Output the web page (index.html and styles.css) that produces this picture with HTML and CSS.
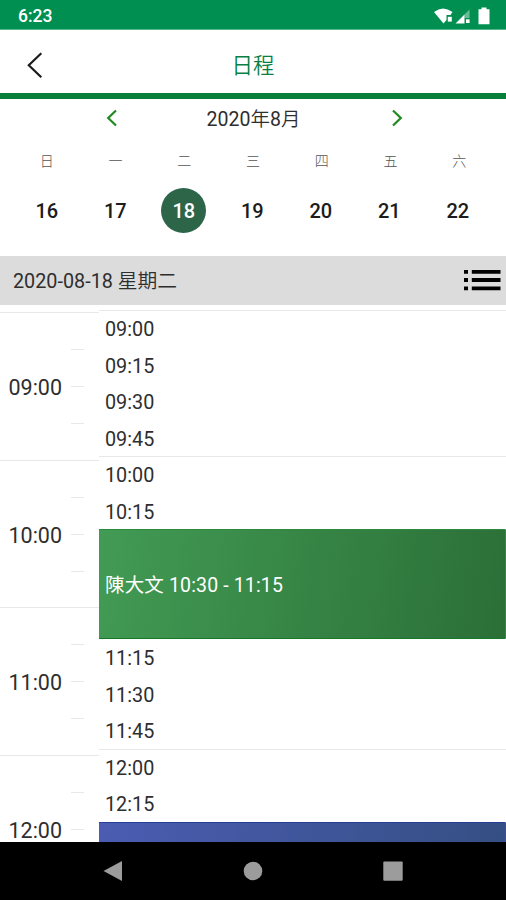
FILE: index.html
```html
<!DOCTYPE html>
<html lang="zh-Hant">
<head>
    <meta charset="UTF-8">
    <meta name="viewport" content="width=device-width, initial-scale=1.0">
    <title>日程</title>
    <link rel="stylesheet" href="styles.css">
</head>
<body>
    <div class="screen">
        <!-- Status Bar -->
        <div class="status-bar">
            <span class="clock">6:23</span>
            <svg class="status-icons" width="58" height="20" viewBox="0 0 58 20">
                <path d="M1 6Q10 -1 19.5 6L17.5 9H13.5V14L10.5 17.5Z" fill="#fff"/>
                <path d="M14.8 10.8H18.8V15.6H14.8Z" fill="#fff"/>
                <path d="M22.5 17.5L31.5 8.5V17.5Z" fill="#fff"/>
                <path d="M31.5 8.5L36.5 3.5V12H31.5Z" fill="#fff" opacity="0.4"/>
                <path d="M33 13.3H36.6V17H33Z" fill="#fff"/>
                <path d="M48.5 1.5H53.5V3.3H56.5V18.2H45.5V3.3H48.5Z" fill="#fff"/>
            </svg>
        </div>

        <!-- App Header -->
        <div class="header">
            <svg class="back-icon" width="18" height="28" viewBox="0 0 18 28">
                <path d="M15.3 2.3L2.8 14.3L15.3 26.3" fill="none" stroke="#1c1c1e" stroke-width="2.2"/>
            </svg>
            <h1>日程</h1>
        </div>

        <!-- Week Calendar -->
        <div class="calendar">
            <div class="month-row">
                <svg width="12" height="18" viewBox="0 0 12 18">
                    <path d="M10 1.5L2.2 9L10 16.5" fill="none" stroke="#1f8a1f" stroke-width="2.2"/>
                </svg>
                <span class="month">2020<span class="cjk">年</span>8<span class="cjk">月</span></span>
                <svg width="12" height="18" viewBox="0 0 12 18">
                    <path d="M2 1.5L9.8 9L2 16.5" fill="none" stroke="#1f8a1f" stroke-width="2.2"/>
                </svg>
            </div>
            <div class="week weekdays">
                <span>日</span>
                <span>一</span>
                <span>二</span>
                <span>三</span>
                <span>四</span>
                <span>五</span>
                <span>六</span>
            </div>
            <div class="week dates">
                <span>16</span>
                <span>17</span>
                <span class="selected">18</span>
                <span>19</span>
                <span>20</span>
                <span>21</span>
                <span>22</span>
            </div>
        </div>

        <div class="date-bar">
            <span>2020-08-18 <span class="cjk">星期二</span></span>
            <svg width="38" height="22" viewBox="0 0 38 22">
                <path d="M1 1H5V4.8H1ZM1 9.1H5V12.9H1ZM1 17.4H5V21.2H1ZM8.8 1H37.5V4.8H8.8ZM8.8 9.1H37.5V12.9H8.8ZM8.8 17.4H37.5V21.2H8.8Z" fill="#000"/>
            </svg>
        </div>

        <!-- Schedule -->
        <div class="schedule">
            <div class="hours">
                <div class="hour"><span>09:00</span><div class="ticks"><i></i><i></i><i></i></div></div>
                <div class="hour"><span>10:00</span><div class="ticks"><i></i><i></i><i></i></div></div>
                <div class="hour"><span>11:00</span><div class="ticks"><i></i><i></i><i></i></div></div>
                <div class="hour"><span>12:00</span><div class="ticks"><i></i><i></i><i></i></div></div>
            </div>
            <div class="slots">
                <div class="slot hour-start">09:00</div>
                <div class="slot">09:15</div>
                <div class="slot">09:30</div>
                <div class="slot">09:45</div>
                <div class="slot hour-start">10:00</div>
                <div class="slot">10:15</div>
                <div class="event event-green">陳大文 10:30 - 11:15</div>
                <div class="slot">11:15</div>
                <div class="slot">11:30</div>
                <div class="slot">11:45</div>
                <div class="slot hour-start">12:00</div>
                <div class="slot">12:15</div>
                <div class="event event-blue"></div>
            </div>
        </div>

        <!-- System Navigation -->
        <div class="nav-bar">
            <svg width="22" height="22" viewBox="0 0 22 22">
                <path d="M1.5 11L20 1V21Z" fill="#9c9c9c"/>
            </svg>
            <svg width="22" height="22" viewBox="0 0 22 22">
                <circle cx="11" cy="11" r="9.3" fill="#9c9c9c"/>
            </svg>
            <svg width="22" height="22" viewBox="0 0 22 22">
                <rect x="1.3" y="1.4" width="19.4" height="19.4" rx="1" fill="#9c9c9c"/>
            </svg>
        </div>
    </div>
</body>
</html>
```

FILE: styles.css
```css
:root {
    --status-color: #008f51;
    --primary-color: #098039;
    --line-color: #e8e8e8;
    --slot-height: 36.56px;
    --hour-height: 147.7px;
}

* {
    box-sizing: border-box;
}

body {
    font-family: Roboto, "Noto Sans CJK TC", sans-serif;
    margin: 0;
    background-color: white;
    color: #2e2e2e;
}

svg {
    display: block;
    flex: none;
}

.screen {
    width: 506px;
    height: 900px;
    display: flex;
    flex-direction: column;
    overflow: hidden;
}

.status-bar {
    flex: none;
    height: 30px;
    padding: 2px 15px 0 18px;
    display: flex;
    align-items: center;
    justify-content: space-between;
    background-color: var(--status-color);
    border-bottom: 1px solid #55b58b;
    color: white;
}

.clock {
    font-size: 17.5px;
    font-weight: 500;
}

.header {
    flex: none;
    height: 69px;
    padding: 0 26px;
    display: grid;
    grid-template-columns: 18px 1fr 18px;
    align-items: center;
    border-bottom: 6px solid var(--primary-color);
}

.back-icon {
    margin-top: 6px;
}

.header h1 {
    margin: 8px 0 0;
    font-size: 21.5px;
    font-weight: 350;
    line-height: 30px;
    text-align: center;
    color: #087f43;
}

.calendar {
    flex: none;
    height: 156.5px;
    padding: 4px 14px 0 12.5px;
}

.month-row {
    display: flex;
    align-items: center;
    justify-content: space-between;
    height: 30px;
    padding: 0 89px 0 93.5px;
}

.month {
    margin: -2px 2px 0 0;
    font-size: 19.5px;
}

.cjk {
    font-weight: 350;
}

.week {
    display: grid;
    grid-template-columns: repeat(7, 1fr);
    justify-items: center;
    align-items: center;
}

.weekdays {
    height: 53px;
    margin-right: -1.5px;
    font-size: 14px;
    font-weight: 300;
    color: #555;
}

.dates {
    height: 48px;
    font-size: 20px;
    font-weight: 500;
    color: #1c1c1c;
}

.dates span {
    width: 45px;
    height: 45px;
    line-height: 46px;
    text-align: center;
}

.dates .selected {
    border-radius: 50%;
    background-color: #2d6549;
    color: white;
}

.date-bar {
    flex: none;
    height: 49px;
    padding: 0 5px 0 13px;
    display: flex;
    align-items: center;
    justify-content: space-between;
    background-color: #dcdcdc;
    font-size: 19.8px;
}

.date-bar > span {
    margin-top: -2px;
}

.schedule {
    flex: 1;
    min-height: 0;
    display: flex;
    overflow: hidden;
}

.hours {
    flex: none;
    width: 99px;
    padding-top: 7.5px;
}

.hour {
    height: var(--hour-height);
    padding: 0 15px 0 8.5px;
    display: flex;
    align-items: center;
    justify-content: space-between;
    border-top: 1px solid var(--line-color);
    font-size: 21.5px;
}

.hour span {
    padding-top: 2px;
}

.ticks {
    height: 75px;
    display: flex;
    flex-direction: column;
    justify-content: space-between;
}

.ticks i {
    width: 13px;
    height: 1px;
    background-color: var(--line-color);
}

.slots {
    flex: 1;
    padding-top: 5.7px;
    font-size: 19.8px;
}

.slot {
    height: var(--slot-height);
    padding-left: 6px;
    line-height: 39px;
}

.hour-start {
    border-top: 1px solid var(--line-color);
    line-height: 37px;
}

.event {
    height: calc(var(--slot-height) * 3);
    padding: 0 0 2px 6px;
    display: flex;
    align-items: center;
    color: white;
    font-size: 19.5px;
    letter-spacing: 0.15px;
    border-right: 1px solid rgba(0, 0, 0, 0.15);
}

.event-green {
    border-top: 1px solid #2c8a3e;
    border-bottom: 1px solid #147a2a;
    background: linear-gradient(100deg, #429b54, #2b6f37);
}

.event-blue {
    border-top: 1px solid #263f96;
    background: linear-gradient(100deg, #4b5cb2, #344f82);
}

.nav-bar {
    flex: none;
    height: 58px;
    padding: 0 102px 0 101.5px;
    display: flex;
    align-items: center;
    justify-content: space-between;
    background-color: black;
}
```
